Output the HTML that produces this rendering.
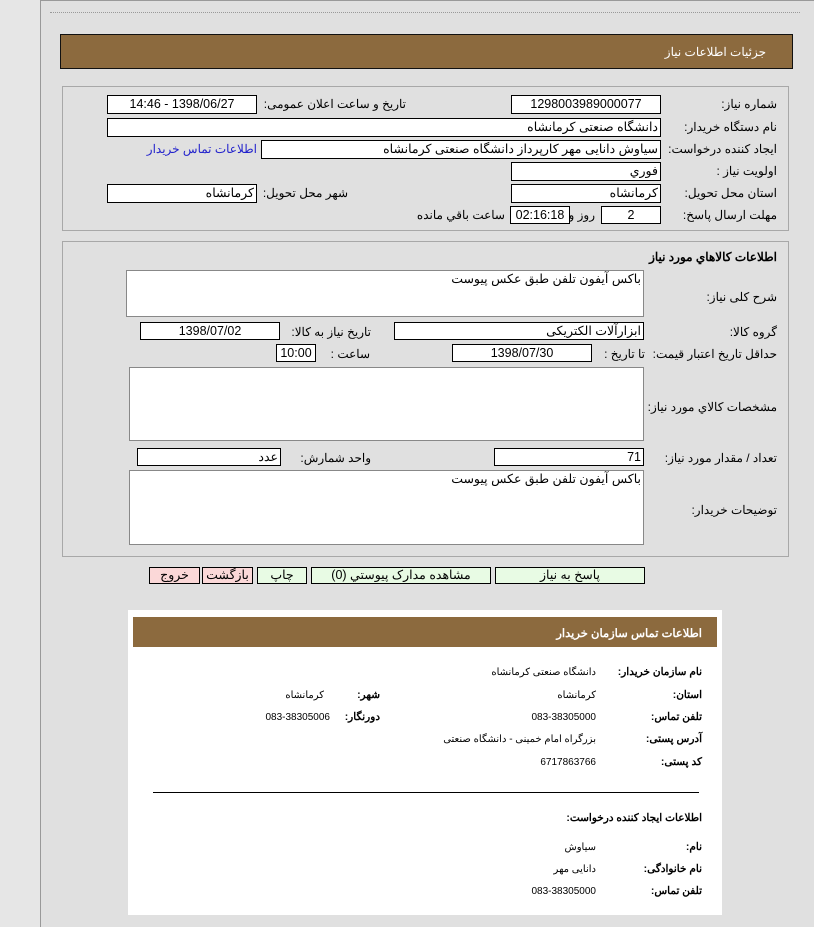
<!DOCTYPE html>
<html><head><meta charset="utf-8"><style>
body{margin:0;width:814px;height:927px;background:#e6e6e6;position:relative;overflow:hidden;font-family:Tahoma,"Liberation Sans","Noto Sans CJK SC",sans-serif;font-size:12px;color:#000}
.a{position:absolute}
.l{position:absolute;white-space:nowrap;direction:rtl;text-align:right}
.b{position:absolute;background:#fff;border:1px solid #000;box-sizing:border-box;white-space:nowrap;direction:rtl;padding:0 2px;line-height:17px;font-size:12.5px}
.c{text-align:center}
.box{position:absolute;border:1px solid #a8a8a8;box-sizing:border-box}
.btn{position:absolute;border:1px solid #000;box-sizing:border-box;text-align:center;line-height:15px;font-size:12.5px;background:#e8fbe4}
.s{font-size:10px}
.bd{font-weight:bold;font-size:10.5px}
</style></head><body>
<div class="a" style="left:41px;top:0;width:773px;height:927px;background:#e0e0e0"></div>
<div class="a" style="left:40px;top:0;width:1px;height:927px;background:#999"></div>
<div class="a" style="left:40px;top:0;width:774px;height:1px;background:#999"></div>
<div class="a" style="left:50px;top:12px;width:750px;border-top:1px dotted #999"></div>
<div class="a" style="left:60px;top:34px;width:733px;height:35px;background:#8c6a3e;border:1px solid #111;box-sizing:border-box"></div>
<div class="l" style="right:48px;top:45px;color:#fff;font-size:12px">جزئیات اطلاعات نیاز</div>

<div class="box" style="left:62px;top:86px;width:727px;height:145px"></div>
<div class="l" style="right:37px;top:97px">شماره نیاز:</div>
<div class="b c" style="left:511px;top:95px;width:150px;height:19px">1298003989000077</div>
<div class="l" style="right:408px;top:97px">تاریخ و ساعت اعلان عمومی:</div>
<div class="b c" style="left:107px;top:95px;width:150px;height:19px">1398/06/27 - 14:46</div>
<div class="l" style="right:37px;top:120px">نام دستگاه خریدار:</div>
<div class="b" style="left:107px;top:118px;width:554px;height:19px">دانشگاه صنعتی کرمانشاه</div>
<div class="l" style="right:37px;top:142px">ایجاد کننده درخواست:</div>
<div class="b" style="left:261px;top:140px;width:400px;height:19px">سیاوش دانایی مهر کارپرداز دانشگاه صنعتی کرمانشاه</div>
<div class="l" style="right:557px;top:142px;color:#2222cc">اطلاعات تماس خریدار</div>
<div class="l" style="right:37px;top:164px">اولویت نیاز :</div>
<div class="b" style="left:511px;top:162px;width:150px;height:19px">فوري</div>
<div class="l" style="right:37px;top:186px">استان محل تحویل:</div>
<div class="b" style="left:511px;top:184px;width:150px;height:19px">کرمانشاه</div>
<div class="l" style="right:466px;top:186px">شهر محل تحویل:</div>
<div class="b" style="left:107px;top:184px;width:150px;height:19px">کرمانشاه</div>
<div class="l" style="right:37px;top:208px">مهلت ارسال پاسخ:</div>
<div class="b c" style="left:601px;top:206px;width:60px;height:18px">2</div>
<div class="l" style="right:219px;top:208px">روز و</div>
<div class="b c" style="left:510px;top:206px;width:60px;height:18px">02:16:18</div>
<div class="l" style="right:309px;top:208px">ساعت باقي مانده</div>

<div class="box" style="left:62px;top:241px;width:727px;height:316px"></div>
<div class="l" style="right:37px;top:250px;font-weight:bold">اطلاعات کالاهاي مورد نياز</div>
<div class="l" style="right:37px;top:290px">شرح کلی نیاز:</div>
<div class="b" style="left:126px;top:270px;width:518px;height:47px;border-color:#888">باکس آیفون تلفن طبق عکس پیوست</div>
<div class="l" style="right:37px;top:325px">گروه کالا:</div>
<div class="b" style="left:394px;top:322px;width:250px;height:18px">ابزارآلات الکتریکی</div>
<div class="l" style="right:443px;top:325px">تاریخ نیاز به کالا:</div>
<div class="b c" style="left:140px;top:322px;width:140px;height:18px">1398/07/02</div>
<div class="l" style="right:37px;top:347px">حداقل تاریخ اعتبار قیمت:</div>
<div class="l" style="right:169px;top:347px">تا تاریخ :</div>
<div class="b c" style="left:452px;top:344px;width:140px;height:18px">1398/07/30</div>
<div class="l" style="right:444px;top:347px">ساعت :</div>
<div class="b c" style="left:276px;top:344px;width:40px;height:18px">10:00</div>
<div class="l" style="right:37px;top:400px">مشخصات کالاي مورد نياز:</div>
<div class="b" style="left:129px;top:367px;width:515px;height:74px;border-color:#888"></div>
<div class="l" style="right:37px;top:451px">تعداد / مقدار مورد نیاز:</div>
<div class="b" style="left:494px;top:448px;width:150px;height:18px">71</div>
<div class="l" style="right:443px;top:451px">واحد شمارش:</div>
<div class="b" style="left:137px;top:448px;width:144px;height:18px">عدد</div>
<div class="l" style="right:37px;top:503px">توضیحات خریدار:</div>
<div class="b" style="left:129px;top:470px;width:515px;height:75px;border-color:#888">باکس آیفون تلفن طبق عکس پیوست</div>

<div class="btn" style="left:495px;top:567px;width:150px;height:17px">پاسخ به نیاز</div>
<div class="btn" style="left:311px;top:567px;width:180px;height:17px">مشاهده مدارک پیوستي (0)</div>
<div class="btn" style="left:257px;top:567px;width:50px;height:17px">چاپ</div>
<div class="btn" style="left:202px;top:567px;width:51px;height:17px;background:#fbd8d8">بازگشت</div>
<div class="btn" style="left:149px;top:567px;width:51px;height:17px;background:#fbd8d8">خروج</div>

<div class="a" style="left:128px;top:610px;width:594px;height:305px;background:#fff"></div>
<div class="a" style="left:133px;top:617px;width:584px;height:30px;background:#8c6a3e"></div>
<div class="l" style="right:112px;top:626px;color:#fff;font-weight:bold;font-size:11.5px">اطلاعات تماس سازمان خریدار</div>
<div class="l bd" style="right:112px;top:666px">نام سازمان خریدار:</div>
<div class="l s" style="right:218px;top:667px">دانشگاه صنعتی کرمانشاه</div>
<div class="l bd" style="right:112px;top:689px">استان:</div>
<div class="l s" style="right:218px;top:690px">کرمانشاه</div>
<div class="l bd" style="right:434px;top:689px">شهر:</div>
<div class="l s" style="right:490px;top:690px">کرمانشاه</div>
<div class="l bd" style="right:112px;top:711px">تلفن تماس:</div>
<div class="l s" style="right:218px;top:712px">083-38305000</div>
<div class="l bd" style="right:434px;top:711px">دورنگار:</div>
<div class="l s" style="right:484px;top:712px">083-38305006</div>
<div class="l bd" style="right:112px;top:733px">آدرس پستی:</div>
<div class="l s" style="right:218px;top:734px">بزرگراه امام خمینی - دانشگاه صنعتی</div>
<div class="l bd" style="right:112px;top:756px">کد پستی:</div>
<div class="l s" style="right:218px;top:757px">6717863766</div>
<div class="a" style="left:153px;top:792px;width:546px;height:1px;background:#000"></div>
<div class="l bd" style="right:112px;top:812px">اطلاعات ایجاد کننده درخواست:</div>
<div class="l bd" style="right:112px;top:841px">نام:</div>
<div class="l s" style="right:218px;top:842px">سیاوش</div>
<div class="l bd" style="right:112px;top:863px">نام خانوادگی:</div>
<div class="l s" style="right:218px;top:864px">دانایی مهر</div>
<div class="l bd" style="right:112px;top:885px">تلفن تماس:</div>
<div class="l s" style="right:218px;top:886px">083-38305000</div>
</body></html>
